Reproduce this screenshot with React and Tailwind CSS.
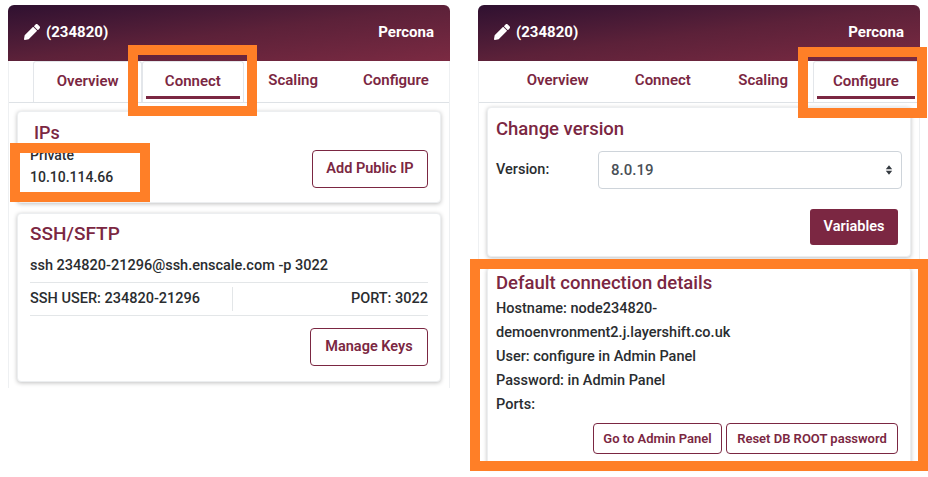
import React from 'react';
import { ChevronsUpDown } from 'lucide-react';

const font = { fontFamily: 'Roboto, "Noto Sans", sans-serif' };

const PencilIcon = () => (
  <svg viewBox="0 0 512 512" className="w-4 h-4 fill-white shrink-0">
    <path d="M497.9 142.1l-46.1 46.1c-4.7 4.7-12.3 4.7-17 0l-111-111c-4.7-4.7-4.7-12.3 0-17l46.1-46.1c18.7-18.7 49.1-18.7 67.9 0l60.1 60.1c18.8 18.7 18.8 49.1 0 67.9zM284.2 99.8L21.6 362.4.4 483.9c-2.9 16.4 11.4 30.6 27.8 27.8l121.5-21.3 262.6-262.6c4.7-4.7 4.7-12.3 0-17l-111-111c-4.8-4.7-12.4-4.7-17.1 0z" />
  </svg>
);

const Header = () => (
  <div className="h-14 rounded-t-md bg-gradient-to-br from-[#2f1030] via-[#5c2139] to-[#7b2a42] flex items-center justify-between pl-4 pr-4 text-white font-bold text-[15px]">
    <div className="flex items-center gap-1.5 -mt-0.5">
      <PencilIcon />
      <span>(234820)</span>
    </div>
    <span className="-mt-0.5">Percona</span>
  </div>
);

const tabs = ['Overview', 'Connect', 'Scaling', 'Configure'];

const Tabs = ({ active, outlined }) => (
  <div className="h-[42px] border-b border-[#dee2e6] flex pl-6 text-[#7b2742] font-semibold text-[15px]">
    {tabs.map((t) => {
      const isActive = t === active;
      const w = t === 'Overview' ? 'w-[110px]' : t === 'Connect' ? 'w-[102px]' : t === 'Scaling' ? 'w-[100px]' : 'w-[107px]';
      const border = isActive || (outlined && t === 'Overview')
        ? 'border-x border-t border-[#e3e6ea] rounded-t-[3px]'
        : '';
      return (
        <div key={t} className={`${w} ${border} h-[41px] relative flex items-center justify-center pb-0.5`}>
          <span>{t}</span>
          {isActive && <div className="absolute left-[3px] right-[3px] bottom-[3px] h-[3px] bg-[#7b2742]" />}
        </div>
      );
    })}
  </div>
);

const OutlineButton = ({ className, children }) => (
  <button type="button" className={`border border-[#7b2742] rounded-[4px] text-[#7b2742] font-semibold bg-white ${className}`}>
    {children}
  </button>
);

const Card = ({ className, children }) => (
  <div className={`bg-white rounded-[4px] border border-[#eceef0] shadow-[0_1px_4px_rgba(0,0,0,0.25)] ${className}`}>
    {children}
  </div>
);

const ConnectPanel = () => (
  <div className="w-[442px] h-[383px] border-x border-[#eef0f2] rounded-t-md">
    <div className="-mx-px">
      <Header />
    </div>
    <Tabs active="Connect" outlined />
    <div className="px-2 pt-2 flex flex-col gap-[10px]">
      <Card className="h-[92px] pl-4 pr-3">
        <h3 className="text-[#7b2742] text-[18px] font-medium pt-[9px] leading-6">IPs</h3>
        <div className="flex items-end justify-between -mt-px">
          <div className="pl-[-4px] -ml-1 text-[#2a2d30] text-[14px] font-medium leading-[22px]">
            <div>Private</div>
            <div>10.10.114.66</div>
          </div>
          <OutlineButton className="w-[116px] h-[38px] text-[14.5px]">Add Public IP</OutlineButton>
        </div>
      </Card>
      <Card className="h-[169px] px-3">
        <h3 className="text-[#7b2742] text-[19px] font-medium pt-[6px] leading-7">SSH/SFTP</h3>
        <p className="text-[#2a2d30] text-[14.5px] font-medium mt-[7px] leading-[22px]">ssh 234820-21296@ssh.enscale.com -p 3022</p>
        <div className="mt-[5px] border-y border-[#e3e6e8] h-[34px] flex items-center justify-between text-[#2a2d30] text-[14.5px] font-medium">
          <div className="w-[203px] border-r border-[#e3e6e8] h-6 flex items-center">SSH USER: 234820-21296</div>
          <div>PORT: 3022</div>
        </div>
        <div className="flex justify-end mt-[12px]">
          <OutlineButton className="w-[118px] h-[38px] text-[14.5px]">Manage Keys</OutlineButton>
        </div>
      </Card>
    </div>
  </div>
);

const ConfigurePanel = () => (
  <div className="w-[442px] h-[460px] border-x border-[#eef0f2] rounded-t-md">
    <div className="-mx-px">
      <Header />
    </div>
    <Tabs active="Configure" />
    <div className="px-2 pt-1 flex flex-col gap-[10px]">
      <Card className="h-[150px] px-2">
        <h3 className="text-[#7b2742] text-[18.5px] font-medium pt-[7px] leading-7">Change version</h3>
        <div className="flex items-center mt-[8px]">
          <span className="w-[102px] text-[#2a2d30] text-[14.5px] font-medium">Version:</span>
          <div className="flex-1 h-[38px] border border-[#ced4da] rounded-[4px] flex items-center justify-between pl-3 pr-2 text-[#495057] text-[15px] font-medium">
            <span>8.0.19</span>
            <svg viewBox="0 0 10 14" className="w-2 h-3 fill-[#343a40]">
              <path d="M5 1l4 5H1zM5 13L1 8h8z" />
            </svg>
          </div>
        </div>
        <div className="flex justify-end mt-[20px] pr-1">
          <button type="button" className="w-[88px] h-9 rounded-[3px] bg-[#7b2742] text-white text-[14.5px] font-semibold">Variables</button>
        </div>
      </Card>
      <Card className="h-[200px] px-2 rounded-b-none">
        <h3 className="text-[#7b2742] text-[18.5px] font-medium pt-[1px] leading-7">Default connection details</h3>
        <div className="text-[#2a2d30] text-[14.5px] font-medium leading-6">
          <div>Hostname: node234820-</div>
          <div>demoenvronment2.j.layershift.co.uk</div>
          <div>User: configure in Admin Panel</div>
          <div>Password: in Admin Panel</div>
          <div>Ports:</div>
        </div>
        <div className="flex justify-end gap-[4px] mt-[6px] pr-1">
          <OutlineButton className="w-[129px] h-[31px] text-[13px]">Go to Admin Panel</OutlineButton>
          <OutlineButton className="w-[172px] h-[31px] text-[13px]">Reset DB ROOT password</OutlineButton>
        </div>
      </Card>
    </div>
  </div>
);

export default function App() {
  return (
    <div className="relative w-[928px] h-[477px] bg-white overflow-hidden" style={font}>
      <div className="flex gap-[28px] pl-2 pt-[5px]">
        <ConnectPanel />
        <ConfigurePanel />
      </div>
      {/* orange annotation frames */}
      <div className="absolute left-[128px] top-[45px] w-[129px] h-[71px] border-[10px] border-[#ff7f27]" />
      <div className="absolute left-[10px] top-[143px] w-[140px] h-[59px] border-[10px] border-[#ff7f27]" />
      <div className="absolute left-[798px] top-[47px] w-[129px] h-[71px] border-[10px] border-[#ff7f27]" />
      <div className="absolute left-[470px] top-[259px] w-[458px] h-[212px] border-[10px] border-[#ff7f27]" />
    </div>
  );
}
